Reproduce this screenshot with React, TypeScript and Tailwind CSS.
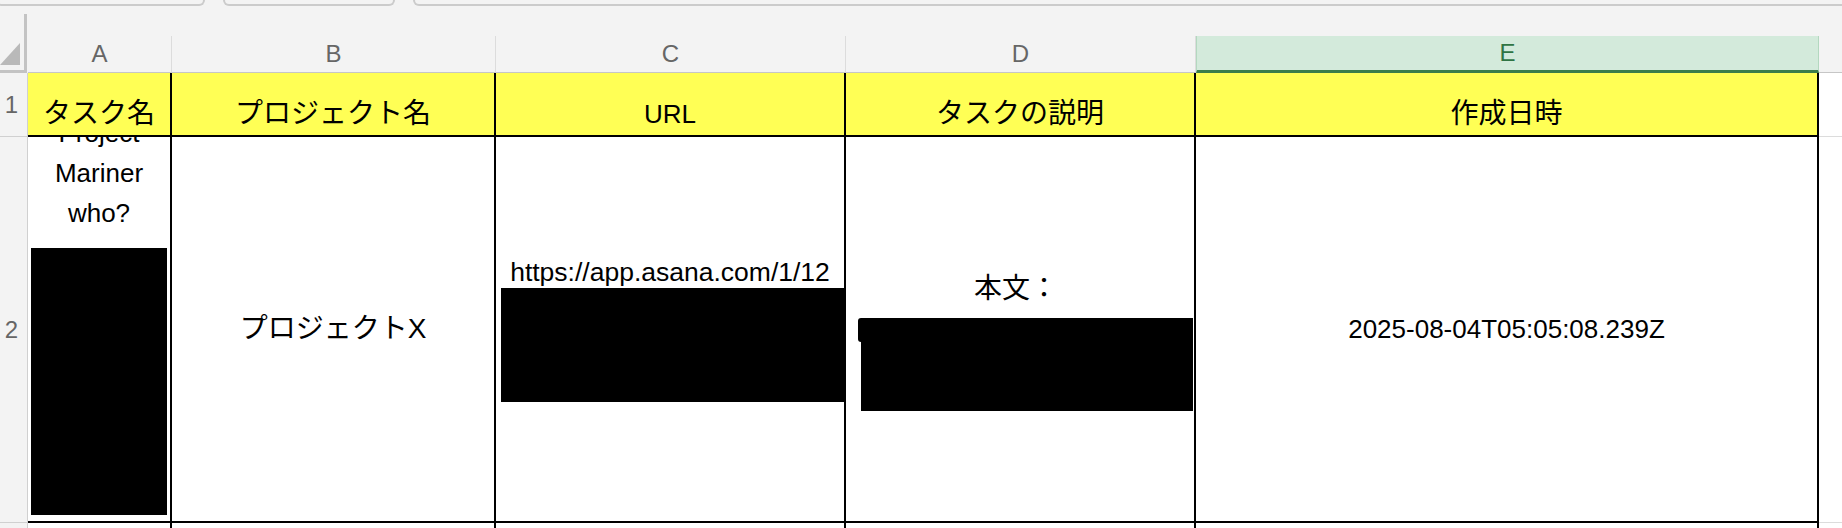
import React from 'react'

const columns = [
  { key: 'A', w: 'w-[144px]' },
  { key: 'B', w: 'w-[324px]' },
  { key: 'C', w: 'w-[350px]' },
  { key: 'D', w: 'w-[350px]' },
]

const headers = ['タスク名', 'プロジェクト名', 'URL', 'タスクの説明', '作成日時']
const dataW = ['w-[144px]', 'w-[324px]', 'w-[350px]', 'w-[350px]', 'w-[623px]']

function SelectAll() {
  return (
    <svg width="28" height="59" viewBox="0 0 28 59">
      <rect x="24" y="0" width="3" height="59" fill="#c3c3c3" />
      <rect x="0" y="56" width="27" height="3" fill="#c3c3c3" />
      <polygon points="0,51 20,51 20,29" fill="#b9b9b9" />
    </svg>
  )
}

export default function App() {
  return (
    <div className="w-[1842px] h-[528px] overflow-hidden bg-[#f3f3f3] font-['Liberation_Sans','Noto_Sans_CJK_JP',sans-serif] text-black">
      {/* sheet tabs (bottom edges only) */}
      <div className="flex h-[6px] gap-[18px] overflow-hidden">
        <div className="-ml-[4px] w-[209px] h-[6px] shrink-0 border-x-2 border-b-2 border-[#cbcbcb] rounded-b-[7px]" />
        <div className="w-[172px] h-[6px] shrink-0 border-x-2 border-b-2 border-[#cbcbcb] rounded-b-[7px]" />
        <div className="w-[1440px] h-[6px] shrink-0 border-x-2 border-b-2 border-[#cbcbcb] rounded-b-[7px]" />
      </div>

      {/* column headers */}
      <div className="flex h-[67px]">
        <div className="w-[28px] shrink-0 pt-[8px]">
          <SelectAll />
        </div>
        <div className="flex flex-1 items-end">
          {columns.map((c) => (
            <div
              key={c.key}
              className={`${c.w} h-[37px] shrink-0 flex items-center justify-center border-r border-b border-r-[#dcdcdc] border-b-[#c6c6c6] text-[24px] text-[#666]`}
            >
              {c.key}
            </div>
          ))}
          <div className="w-[623px] h-[37px] shrink-0 flex items-center justify-center bg-[#d3eadb] border-x border-[#b3d8bf] border-b-[3px] border-b-[#3b7d4a] text-[24px] text-[#2f7443]">
            E
          </div>
          <div className="flex-1 h-[37px] border-b border-[#c6c6c6]" />
        </div>
      </div>

      {/* row 1 */}
      <div className="flex h-[64px] bg-white">
        <div className="w-[28px] shrink-0 flex items-center justify-center pr-[4px] bg-[#f3f3f3] border-r border-b border-[#d0d0d0] text-[24px] text-[#666]">
          1
        </div>
        {headers.map((h, i) => (
          <div
            key={h}
            className={`${dataW[i]} shrink-0 flex items-end justify-center pb-[7px] bg-[#ffff55] border-r-2 border-b-2 border-black leading-none ${h === 'URL' ? 'text-[26px] pb-[8px]' : 'text-[28px]'}`}
          >
            {h}
          </div>
        ))}
        <div className="flex-1 border-b border-[#dcdcdc]" />
      </div>

      {/* row 2 */}
      <div className="flex h-[386px] bg-white">
        <div className="w-[28px] shrink-0 flex items-center justify-center pr-[4px] bg-[#f3f3f3] border-r border-b border-[#d0d0d0] text-[24px] text-[#666]">
          2
        </div>

        {/* A: task name, overflows the cell */}
        <div className="w-[144px] shrink-0 overflow-hidden border-r-2 border-b-2 border-black">
          <div className="-mt-[24px] flex flex-col items-center text-[26px] leading-[40px]">
            <span>Project</span>
            <span>Mariner</span>
            <span>who?</span>
            <div className="mt-[15px] w-[136px] h-[267px] bg-black" />
          </div>
        </div>

        {/* B: project */}
        <div className="w-[324px] shrink-0 flex items-center justify-center border-r-2 border-b-2 border-black text-[28px] leading-none">
          プロジェクトX
        </div>

        {/* C: url */}
        <div className="w-[350px] shrink-0 overflow-hidden pt-[122px] border-r-2 border-b-2 border-black">
          <div className="text-center text-[26.5px] leading-none whitespace-nowrap">https://app.asana.com/1/12</div>
          <div className="mt-[2px] ml-[5px] w-[343px] h-[114px] bg-black" />
        </div>

        {/* D: description */}
        <div className="w-[350px] shrink-0 overflow-hidden pt-[138px] border-r-2 border-b-2 border-black">
          <div className="text-center text-[28px] leading-none pr-[8px]">本文：</div>
          <div className="mt-[15px] flex items-start">
            <div className="ml-[12px] w-[3px] h-[24px] rounded-l-full bg-black" />
            <div className="w-[332px] h-[93px] bg-black" />
          </div>
        </div>

        {/* E: created at */}
        <div className="w-[623px] shrink-0 flex items-center justify-center border-r-2 border-b-2 border-black text-[26px] leading-none">
          2025-08-04T05:05:08.239Z
        </div>
        <div className="flex-1 border-b border-[#dcdcdc]" />
      </div>

      {/* row 3 (cut off) */}
      <div className="flex h-[20px] bg-white">
        <div className="w-[28px] shrink-0 bg-[#f3f3f3] border-r border-[#d0d0d0]" />
        {dataW.map((w) => (
          <div key={w + 'r3'} className={`${w} shrink-0 border-r-2 border-black`} />
        ))}
        <div className="flex-1" />
      </div>
    </div>
  )
}
